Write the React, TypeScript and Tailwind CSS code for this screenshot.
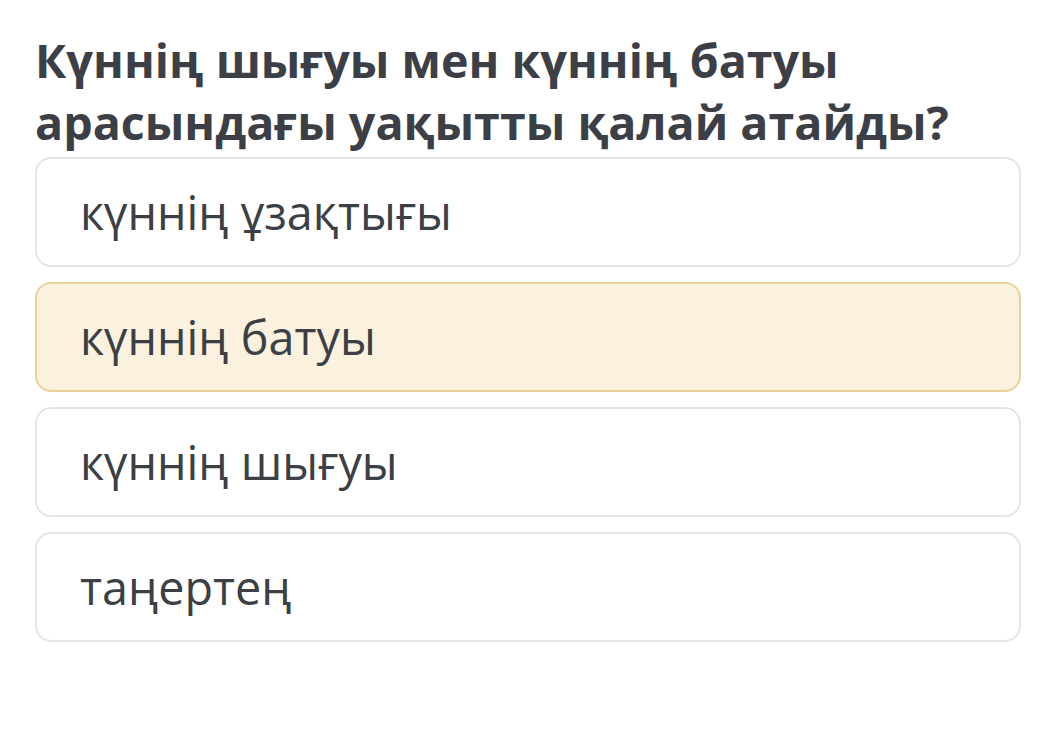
import React from "react";

const options = [
  { id: 1, text: "күннің ұзақтығы", selected: false },
  { id: 2, text: "күннің батуы", selected: true },
  { id: 3, text: "күннің шығуы", selected: false },
  { id: 4, text: "таңертең", selected: false },
];

const App = () => {
  return (
    <div
      className="w-[1040px] h-[730px] bg-white pl-[35px] pr-[19px] pt-[29px]"
      style={{ fontFamily: '"Open Sans", "Noto Sans", sans-serif' }}
    >
      {/* question */}
      <h1 className="text-[46.6px] font-bold leading-[62px] text-[#3c3f46]">
        Күннің шығуы мен күннің батуы арасындағы уақытты қалай атайды?
      </h1>

      {/* answers */}
      <div className="flex flex-col gap-[15px] mt-[4px]">
        {options.map((item) => (
          <div
            key={item.id}
            className={
              item.selected
                ? "h-[110px] flex items-center px-[43px] rounded-[16px] border-2 border-[#ead39a] bg-[#faf1df]"
                : "h-[110px] flex items-center px-[43px] rounded-[16px] border-2 border-[#e5e5e5] bg-white"
            }
          >
            <span className="text-[46.7px] leading-none text-[#3c3f44]">{item.text}</span>
          </div>
        ))}
      </div>
    </div>
  );
};

export default App;
